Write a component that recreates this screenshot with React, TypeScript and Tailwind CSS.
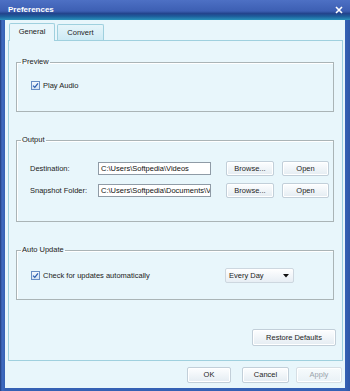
import React from "react";

function Btn({ children, className = "", disabled = false }: { children: React.ReactNode; className?: string; disabled?: boolean }) {
  return (
    <div
      className={
        "flex items-center justify-center rounded-[2px] border text-[7.5px] leading-none shadow-[inset_0_0_0_1px_#ffffff] " +
        (disabled
          ? "border-[#d6dfe5] bg-[linear-gradient(#f7fbfd,#e9f1f6)] text-[#9aa3ab] "
          : "border-[#c2cfd9] bg-[linear-gradient(#fdfeff,#e4ecf2)] text-[#1e1e1e] ") +
        className
      }
    >
      {children}
    </div>
  );
}

function Check() {
  return (
    <div className="w-[9px] h-[9px] shrink-0 border border-[#6a8ec4] bg-[linear-gradient(#f4f8fd,#d5e3f3)] flex items-center justify-center">
      <svg width="7" height="7" viewBox="0 0 7 7">
        <path d="M1 3.6 L2.8 5.4 L6 1.4" fill="none" stroke="#2c5fb0" strokeWidth="1.3" />
      </svg>
    </div>
  );
}

function Group({ title, className = "", children }: { title: string; className?: string; children: React.ReactNode }) {
  return (
    <fieldset className={"border border-[#aab4b6] shadow-[inset_1px_1px_0_#ffffff] " + className}>
      <legend className="ml-[4px] px-[1px] text-[7.5px] leading-[12px] text-[#222]">{title}</legend>
      {children}
    </fieldset>
  );
}

export default function App() {
  return (
    <div className="w-[350px] h-[391px] bg-[linear-gradient(to_right,#1f3a7a_0px,#3f6bc0_2px,#3561b4_5px,#3561b4_345px,#2f58a8_350px)] flex flex-col overflow-hidden [font-family:'Liberation_Sans',Arial,sans-serif]">
      {/* Title bar */}
      <div className="h-[20px] shrink-0 flex items-center justify-between pl-[8px] pr-[7px] bg-[linear-gradient(to_bottom,#4d70c4_0%,#3d5fb3_55%,#22448c_68%,#1d5f9c_82%,#2a92bc_100%)]">
        <span className="text-white font-bold text-[8px] leading-none">Preferences</span>
        <svg width="8" height="8" viewBox="0 0 8 8">
          <path d="M1 1 L7 7 M7 1 L1 7" stroke="#ffffff" strokeWidth="1.6" />
        </svg>
      </div>

      {/* Body */}
      <div className="flex-1 mx-[5px] mb-[3px] bg-[#e8f6fb] flex flex-col">
        {/* Tabs */}
        <div className="h-[20px] pt-[3px] pl-[4px] flex items-end">
          <div className="relative z-10 h-[18px] -mb-[1px] w-[46px] border border-b-0 border-[#9fd0de] rounded-t-[2px] bg-[#e8f6fb] flex items-center justify-center text-[7.5px] text-[#222] pb-[1px]">
            General
          </div>
          <div className="h-[16px] w-[47px] ml-[2px] border border-b-0 border-[#9fd0de] rounded-t-[2px] bg-[linear-gradient(#e6f5fa,#cdeaf4)] flex items-center justify-center text-[7.5px] text-[#222]">
            Convert
          </div>
        </div>

        {/* Panel */}
        <div className="ml-[3px] w-[335px] h-[321px] border border-[#9fd0de] flex flex-col pl-[7px] pr-[8px]">
          <Group title="Preview" className="mt-[15px] h-[56px]">
            <div className="mt-[11px] pl-[14px] h-[13px] flex items-center">
              <Check />
              <span className="ml-[3px] text-[7.5px] text-[#222]">Play Audio</span>
            </div>
          </Group>

          <Group title="Output" className="mt-[22px] h-[88px]">
            <div className="pt-[15px] pl-[13px] flex flex-col gap-[7px]">
              <div className="h-[15px] flex items-center">
                <span className="w-[68px] text-[7.5px] text-[#222]">Destination:</span>
                <div className="w-[113px] h-[13px] border border-[#8f9ba6] bg-white flex items-center pl-[2px] text-[7.5px] text-[#111] whitespace-nowrap overflow-hidden">
                  C:\Users\Softpedia\Videos
                </div>
                <Btn className="ml-[15px] w-[48px] h-[15px]">Browse...</Btn>
                <Btn className="ml-[8px] w-[47px] h-[15px]">Open</Btn>
              </div>
              <div className="h-[15px] flex items-center">
                <span className="w-[68px] text-[7.5px] text-[#222]">Snapshot Folder:</span>
                <div className="w-[113px] h-[13px] border border-[#8f9ba6] bg-white flex items-center pl-[2px] text-[7.5px] text-[#111] whitespace-nowrap overflow-hidden">
                  C:\Users\Softpedia\Documents\Videos
                </div>
                <Btn className="ml-[15px] w-[48px] h-[15px]">Browse...</Btn>
                <Btn className="ml-[8px] w-[47px] h-[15px]">Open</Btn>
              </div>
            </div>
          </Group>

          <Group title="Auto Update" className="mt-[22px] h-[56px]">
            <div className="pt-[12px] pl-[14px] pr-[39px] h-[27px] flex items-center">
              <Check />
              <span className="ml-[3px] text-[7.5px] text-[#222]">Check for updates automatically</span>
              <div className="ml-auto w-[69px] h-[15px] rounded-[2px] border border-[#cdd7df] bg-[linear-gradient(#ffffff,#e7eef4)] flex items-center justify-between pl-[3px] pr-[4px] text-[7.5px] text-[#222]">
                <span>Every Day</span>
                <svg width="6" height="4" viewBox="0 0 6 4">
                  <path d="M0 0 L6 0 L3 3.5 Z" fill="#111" />
                </svg>
              </div>
            </div>
          </Group>

          <Btn className="mt-[29px] self-end mr-[-2px] w-[84px] h-[17px]">Restore Defaults</Btn>
        </div>

        {/* Bottom buttons */}
        <div className="mt-[6px] flex justify-end pr-[3px]">
          <Btn className="w-[44px] h-[16px]">OK</Btn>
          <Btn className="ml-[11px] w-[47px] h-[16px]">Cancel</Btn>
          <Btn disabled className="ml-[7px] w-[46px] h-[16px]">Apply</Btn>
        </div>
      </div>
    </div>
  );
}
